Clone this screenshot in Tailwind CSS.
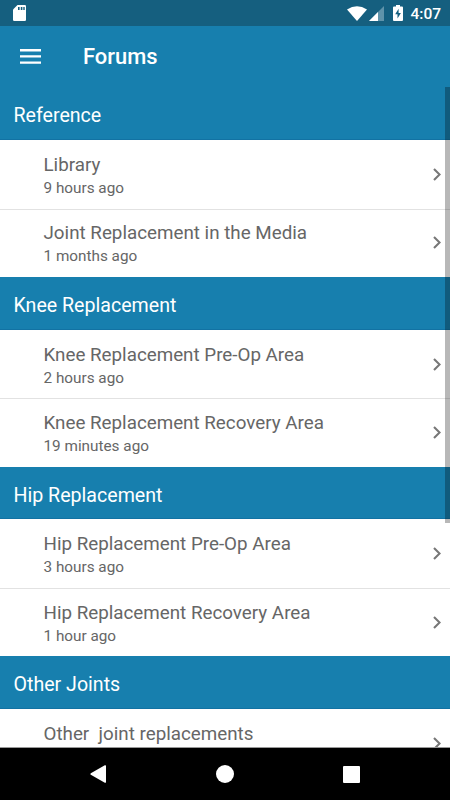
<!DOCTYPE html>
<html lang="en">
<head>
<meta charset="utf-8">
<title>Forums</title>
<script src="https://cdn.jsdelivr.net/npm/@tailwindcss/browser@4"></script>
</head>
<body class="relative flex h-[800px] w-[450px] flex-col overflow-hidden bg-white font-['Roboto',sans-serif] text-[#666]">
<svg class="hidden"><symbol id="chev" viewBox="0 0 8 13"><path d="M1 .9 6.6 6.5 1 12.1" fill="none" stroke="#777" stroke-width="2.1"/></symbol></svg>

<header class="shrink-0 bg-[#177fae] text-white">
  <div class="flex h-[26px] items-center bg-[#155f7f] pr-[9px] pl-[13px]">
    <svg class="h-4 w-[13px]" viewBox="0 0 13 16"><path d="M4.5 0H11.8Q13 0 13 1.2V14.8Q13 16 11.8 16H1.2Q0 16 0 14.8V4.5Z" fill="#fff"/><path d="M5 2h1.6v3H5zM7.8 2h1.6v3H7.8zM10.3 2h1.4v3h-1.4z" fill="#155f7f"/></svg>
    <svg class="ml-auto h-[15px] w-5" viewBox="0 0 20 15"><path d="M0 3.5Q10-3 20 3.5L10 15Z" fill="#fff"/></svg>
    <svg class="ml-[2px] h-[15px] w-[15px]" viewBox="0 0 15 15"><path d="M15 0V15H0Z" fill="#5f93aa"/><path d="M9 6V15H0Z" fill="#fff"/></svg>
    <svg class="ml-[9px] h-4 w-[10px]" viewBox="0 0 10 16"><path d="M3 0H7V1.5H9Q10 1.5 10 2.5V15Q10 16 9 16H1Q0 16 0 15V2.5Q0 1.5 1 1.5H3Z" fill="#fff"/><path d="M5.6 3.8 2.2 9.2H4.5V13.6L7.9 8H5.6Z" fill="#155f7f"/></svg>
    <span class="ml-[7px] pt-[2px] text-[15.5px] leading-6 font-medium">4:07</span>
  </div>
  <div class="flex h-[61px] items-center pl-5">
    <svg class="h-[15px] w-[21px]" viewBox="0 0 21 15"><path d="M0 0h21v2.4H0zM0 6.2h21v2.4H0zM0 12.4h21v2.4H0z" fill="#fff"/></svg>
    <h1 class="ml-[42px] pt-[2px] text-[21.9px] font-medium">Forums</h1>
  </div>
</header>

<main class="min-h-0 flex-1 overflow-hidden">
  <section>
    <h2 class="flex h-[53px] items-center border-b border-[#1272a3] bg-[#177fae] pt-[6px] pl-[13.5px] text-[19.6px] text-white">Reference</h2>
    <div class="flex h-[70px] justify-between border-b border-[#e2e2e2] pt-[13px] pr-[9px] pl-[43.5px]">
      <div><p class="text-[18.8px] leading-[24px]">Library</p><p class="text-[15.3px] leading-[22px]">9 hours ago</p></div>
      <svg class="mt-[15px] h-[13px] w-2"><use href="#chev"/></svg>
    </div>
    <div class="flex h-[67px] justify-between pt-[11px] pr-[9px] pl-[43.5px]">
      <div><p class="text-[18.8px] leading-[24px]">Joint Replacement in the Media</p><p class="text-[15.3px] leading-[22px]">1 months ago</p></div>
      <svg class="mt-[15px] h-[13px] w-2"><use href="#chev"/></svg>
    </div>
  </section>
  <section>
    <h2 class="flex h-[53px] items-center border-b border-[#1272a3] bg-[#177fae] pt-[6px] pl-[13.5px] text-[19.6px] text-white">Knee Replacement</h2>
    <div class="flex h-[69px] justify-between border-b border-[#e2e2e2] pt-[13px] pr-[9px] pl-[43.5px]">
      <div><p class="text-[18.8px] leading-[24px]">Knee Replacement Pre-Op Area</p><p class="text-[15.3px] leading-[22px]">2 hours ago</p></div>
      <svg class="mt-[15px] h-[13px] w-2"><use href="#chev"/></svg>
    </div>
    <div class="flex h-[68px] justify-between pt-[12px] pr-[9px] pl-[43.5px]">
      <div><p class="text-[18.8px] leading-[24px]">Knee Replacement Recovery Area</p><p class="text-[15.3px] leading-[22px]">19 minutes ago</p></div>
      <svg class="mt-[15px] h-[13px] w-2"><use href="#chev"/></svg>
    </div>
  </section>
  <section>
    <h2 class="flex h-[52px] items-center border-b border-[#1272a3] bg-[#177fae] pt-[6px] pl-[13.5px] text-[19.6px] text-white">Hip Replacement</h2>
    <div class="flex h-[70px] justify-between border-b border-[#e2e2e2] pt-[13px] pr-[9px] pl-[43.5px]">
      <div><p class="text-[18.8px] leading-[24px]">Hip Replacement Pre-Op Area</p><p class="text-[15.3px] leading-[22px]">3 hours ago</p></div>
      <svg class="mt-[15px] h-[13px] w-2"><use href="#chev"/></svg>
    </div>
    <div class="flex h-[67px] justify-between pt-[12px] pr-[9px] pl-[43.5px]">
      <div><p class="text-[18.8px] leading-[24px]">Hip Replacement Recovery Area</p><p class="text-[15.3px] leading-[22px]">1 hour ago</p></div>
      <svg class="mt-[15px] h-[13px] w-2"><use href="#chev"/></svg>
    </div>
  </section>
  <section>
    <h2 class="flex h-[53px] items-center border-b border-[#1272a3] bg-[#177fae] pt-[6px] pl-[13.5px] text-[19.6px] text-white">Other Joints</h2>
    <div class="flex h-[70px] justify-between pt-[13px] pr-[9px] pl-[43.5px]">
      <p class="text-[18.8px] leading-[24px] whitespace-pre">Other  joint replacements</p>
      <svg class="mt-[15px] h-[13px] w-2"><use href="#chev"/></svg>
    </div>
  </section>
</main>

<nav class="flex h-[53px] shrink-0 items-center border-t border-[#999] bg-black pl-[90px]">
  <svg class="h-[18px] w-4" viewBox="0 0 16 18"><path d="M14.8.3Q16-.2 16 1V17Q16 18.2 14.8 17.7L.8 9.8Q0 9 .8 8.2Z" fill="#fff"/></svg>
  <div class="ml-[110px] size-[18px] rounded-full bg-white"></div>
  <div class="ml-[109px] size-[17px] rounded-[1px] bg-white"></div>
</nav>

<div class="absolute top-[87px] right-0 h-[436px] w-[5px] bg-black/28"></div>
</body>
</html>
